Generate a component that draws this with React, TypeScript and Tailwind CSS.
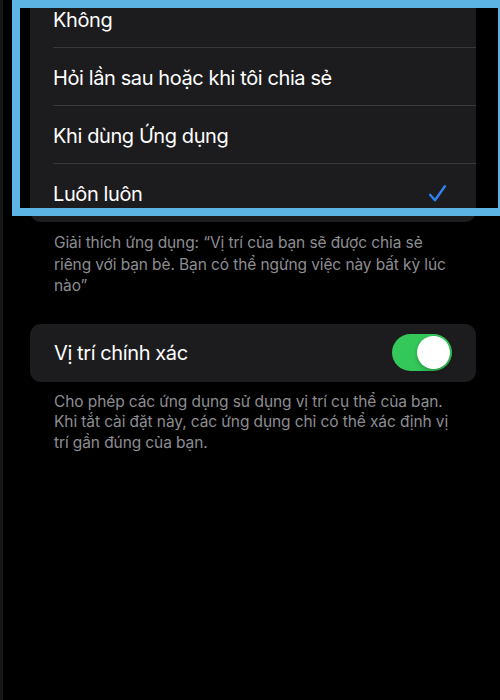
import React from "react";

const font = { fontFamily: '"Inter", "Noto Sans", sans-serif' };

function Check() {
  return (
    <svg width="19" height="19" viewBox="0 0 18 18" fill="none">
      <path d="M2 10.2 L6.6 15.4 L16 2.2" stroke="#2f80f0" strokeWidth="2.3" strokeLinecap="round" strokeLinejoin="round" />
    </svg>
  );
}

function Row({ label, last, checked }: { label: string; last?: boolean; checked?: boolean }) {
  return (
    <div className="h-[58px] pl-[23px] flex">
      <div className={`flex-1 h-full flex items-center justify-between pr-[29px] ${last ? "" : "border-b border-[#38383a]"}`}>
        <span className="text-[20px] text-white tracking-[-0.4px] pt-[2px]">{label}</span>
        {checked && <Check />}
      </div>
    </div>
  );
}

export default function App() {
  return (
    <div className="w-[500px] h-[700px] bg-black relative overflow-hidden flex" style={font}>
      <div className="w-[3px] h-full bg-[#161616]" />
      <div className="pl-[27px] w-[473px] flex flex-col">
        <div className="-mt-[10px] bg-[#1c1c1e] rounded-[11px] w-[446px] flex flex-col">
          <Row label="Không" />
          <Row label="Hỏi lần sau hoặc khi tôi chia sẻ" />
          <Row label="Khi dùng Ứng dụng" />
          <Row label="Luôn luôn" last checked />
        </div>
        <p className="pl-[24px] pt-[10px] text-[15.5px] leading-[21.5px] text-[#8d8d92] whitespace-nowrap tracking-[-0.1px]">
          Giải thích ứng dụng: “Vị trí của bạn sẽ được chia sẻ
          <br />
          riêng với bạn bè. Bạn có thể ngừng việc này bất kỳ lúc
          <br />
          nào”
        </p>
        <div className="mt-[27px] bg-[#1c1c1e] rounded-[11px] w-[446px] h-[58px] pl-[24px] pr-[24px] flex items-center justify-between">
          <span className="text-[20px] text-white tracking-[-0.4px]">Vị trí chính xác</span>
          <div className="w-[60px] h-[37px] rounded-full bg-[#34c759] flex items-center justify-end pr-[2px]">
            <div className="w-[33px] h-[33px] rounded-full bg-white shadow-[0_2px_4px_rgba(0,0,0,0.25)]" />
          </div>
        </div>
        <p className="pl-[24px] pt-[10px] text-[15.5px] leading-[20.5px] text-[#8d8d92] whitespace-nowrap tracking-[-0.1px]">
          Cho phép các ứng dụng sử dụng vị trí cụ thể của bạn.
          <br />
          Khi tắt cài đặt này, các ứng dụng chỉ có thể xác định vị
          <br />
          trí gần đúng của bạn.
        </p>
      </div>
      <div className="absolute left-[12px] top-0 w-[494px] h-[216px] border-[8px] border-[#5cb4e4] pointer-events-none" />
    </div>
  );
}
